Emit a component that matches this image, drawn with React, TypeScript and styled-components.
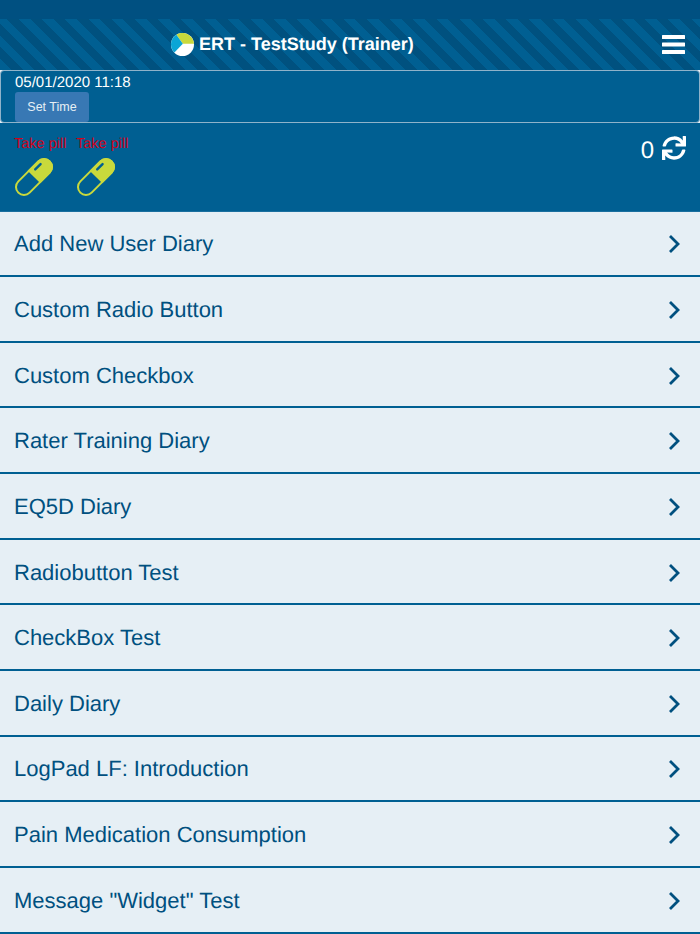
import styled, { createGlobalStyle } from "styled-components";
import { FaSync } from "react-icons/fa";

const diaries = [
  "Add New User Diary",
  "Custom Radio Button",
  "Custom Checkbox",
  "Rater Training Diary",
  "EQ5D Diary",
  "Radiobutton Test",
  "CheckBox Test",
  "Daily Diary",
  "LogPad LF: Introduction",
  "Pain Medication Consumption",
  'Message "Widget" Test',
];

const GlobalStyle = createGlobalStyle`
  html, body {
    margin: 0;
    padding: 0;
    background: #e6eff5;
    font-family: "Liberation Sans", Arial, sans-serif;
    text-rendering: geometricPrecision;
  }
`;

const Page = styled.div`
  width: 700px;
  height: 934px;
  overflow: hidden;
  background: #e6eff5;
`;

const StatusBar = styled.div`
  height: 19px;
  background: #005081;
`;

const Header = styled.header`
  height: 51px;
  display: flex;
  align-items: center;
  padding: 0 15px 0 171px;
  box-sizing: border-box;
  background: repeating-linear-gradient(
    45deg,
    #005f92 0,
    #005f92 8.200px,
    #00517f 8.200px,
    #00517f 16.400px
  );
`;

const Title = styled.h1`
  flex: 1;
  display: flex;
  align-items: center;
  gap: 5px;
  margin: 0;
  font-size: 18px;
  font-weight: 700;
  color: #fff;
`;

const TimeBox = styled.div`
  height: 53px;
  box-sizing: border-box;
  padding: 4px 14px 0;
  border: 1px solid #8fb3ca;
  border-radius: 4px;
  background: #005f92;
  color: #fff;
  font-size: 15px;
  line-height: 16px;
`;

const SetTime = styled.button`
  display: block;
  width: 74px;
  height: 30px;
  margin-top: 1px;
  padding: 0;
  border: none;
  border-radius: 3px;
  background: #3878b4;
  color: #e6eff5;
  font: 12.500px "Liberation Sans", Arial, sans-serif;
`;

const StatusArea = styled.div`
  height: 88.500px;
  box-sizing: border-box;
  display: flex;
  justify-content: space-between;
  padding: 13px 14px 0;
  background: #005f92;
  border-bottom: 1px solid #1a6f9f;
`;

const Pills = styled.div`
  display: flex;
  gap: 10px;
`;

const Pill = styled.div`
  display: flex;
  flex-direction: column;
  gap: 5px;
  width: 52px;
  color: #d0021b;
  font-size: 14.500px;
  line-height: 16px;
  white-space: nowrap;
`;

const Sync = styled.div`
  display: flex;
  align-items: flex-start;
  gap: 8px;
  color: #fff;
  font-size: 24px;
  line-height: 30px;
`;

const DiaryList = styled.ul`
  margin: 0;
  padding: 0;
  list-style: none;
`;

const DiaryRow = styled.li`
  height: 65.650px;
  box-sizing: border-box;
  display: flex;
  align-items: center;
  justify-content: space-between;
  padding: 2px 19px 0 14px;
  border-bottom: 2px solid #005f92;
  color: #00507f;
  font-size: 22px;
`;

const Logo = () => (
  <svg width="23" height="23" viewBox="0 0 46 46">
    <circle cx="23" cy="23" r="23" fill="#fff" />
    <path d="M10.800 3.400A23 23 0 0 1 46 21.600H23.700z" fill="#c9d93c" />
    <path d="M10.800 3.400 23.700 21.600 6.800 39.200A23 23 0 0 1 10.800 3.400z" fill="#0ba5d6" />
  </svg>
);

const Menu = () => (
  <svg width="23" height="19" viewBox="0 0 23 19" fill="#fff">
    <rect y="0" width="23" height="4" rx="0.500" />
    <rect y="7.500" width="23" height="4" rx="0.500" />
    <rect y="15" width="23" height="4" rx="0.500" />
  </svg>
);

const PillIcon = () => (
  <svg width="40" height="40" viewBox="0 0 40 40">
    <g transform="rotate(-45 20 20)">
      <rect x="-2.150" y="12" width="44.300" height="16" rx="8" fill="none" stroke="#c9d93c" strokeWidth="2" />
      <path d="M20 11h14.150a9 9 0 0 1 0 18H20z" fill="#c9d93c" />
      <rect x="25" y="14.300" width="10" height="2.400" rx="1.200" fill="#005f92" />
    </g>
  </svg>
);

const Chevron = () => (
  <svg width="13" height="18" viewBox="0 0 13 18">
    <path d="M2 1 10 9 2 17" fill="none" stroke="#00507f" strokeWidth="2.800" />
  </svg>
);

export default function App() {
  return (
    <Page>
      <GlobalStyle />
      <StatusBar />
      <Header>
        <Title>
          <Logo />
          ERT - TestStudy (Trainer)
        </Title>
        <Menu />
      </Header>
      <TimeBox>
        05/01/2020 11:18
        <SetTime>Set Time</SetTime>
      </TimeBox>
      <StatusArea>
        <Pills>
          <Pill>
            Take pill
            <PillIcon />
          </Pill>
          <Pill>
            Take pill
            <PillIcon />
          </Pill>
        </Pills>
        <Sync>
          0
          <FaSync size={24} />
        </Sync>
      </StatusArea>
      <DiaryList>
        {diaries.map((name) => (
          <DiaryRow key={name}>
            {name}
            <Chevron />
          </DiaryRow>
        ))}
      </DiaryList>
    </Page>
  );
}
